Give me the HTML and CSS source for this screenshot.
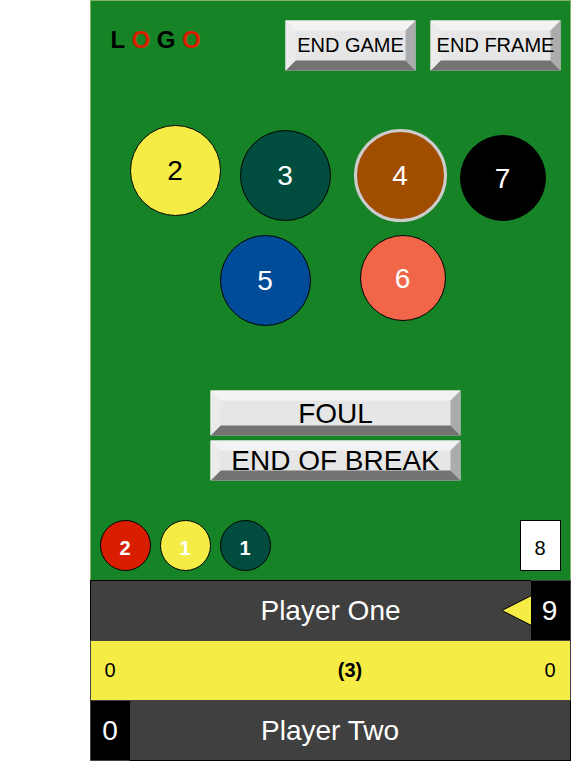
FILE: index.html
```html
<!DOCTYPE html>
<html lang="en">
<head>
<meta charset="utf-8">
<title>Snooker Scoreboard</title>
<link rel="stylesheet" href="styles.css">
</head>
<body>
<main class="app">
  <section class="table">
    <header class="topbar">
      <div class="logo">L <span>O</span> G <span>O</span></div>
      <button class="bevel bevel-small">
        <svg width="131" height="51"><path fill="#e6e6e6" d="M.5 .5h130v50H.5z"/><path fill="#f3f3f3" d="M.5 .5h130l-10 10h-110z"/><path fill="#acacac" d="M130.5 .5v50l-10-10v-30z"/><path fill="#737373" d="M.5 50.5h130l-10-10h-110z"/><path fill="#ebebeb" d="M.5 .5v50l10-10v-30z"/></svg>
        <span>END GAME</span>
      </button>
      <button class="bevel bevel-small">
        <svg width="131" height="51"><path fill="#e6e6e6" d="M.5 .5h130v50H.5z"/><path fill="#f3f3f3" d="M.5 .5h130l-10 10h-110z"/><path fill="#acacac" d="M130.5 .5v50l-10-10v-30z"/><path fill="#737373" d="M.5 50.5h130l-10-10h-110z"/><path fill="#ebebeb" d="M.5 .5v50l10-10v-30z"/></svg>
        <span>END FRAME</span>
      </button>
    </header>
    <div class="balls balls-first">
      <div class="ball yellow">2</div>
      <div class="ball green">3</div>
      <div class="ball brown">4</div>
      <div class="ball small black">7</div>
    </div>
    <div class="balls balls-second">
      <div class="ball blue">5</div>
      <div class="ball small pink">6</div>
    </div>
    <div class="actions">
      <button class="bevel">
        <svg width="251" height="46"><path fill="#e6e6e6" d="M.5 .5h250v45H.5z"/><path fill="#f3f3f3" d="M.5 .5h250l-10 10h-230z"/><path fill="#acacac" d="M250.5 .5v45l-10-10v-25z"/><path fill="#737373" d="M.5 45.5h250l-10-10h-230z"/><path fill="#ebebeb" d="M.5 .5v45l10-10v-25z"/></svg>
        <span class="foul">FOUL</span>
      </button>
      <button class="bevel">
        <svg width="251" height="41"><path fill="#e6e6e6" d="M.5 .5h250v40H.5z"/><path fill="#f3f3f3" d="M.5 .5h250l-10 10h-230z"/><path fill="#acacac" d="M250.5 .5v40l-10-10v-20z"/><path fill="#737373" d="M.5 40.5h250l-10-10h-230z"/><path fill="#ebebeb" d="M.5 .5v40l10-10v-20z"/></svg>
        <span>END OF BREAK</span>
      </button>
    </div>
    <div class="break">
      <div class="potted red">2</div>
      <div class="potted yellow-potted">1</div>
      <div class="potted green">1</div>
      <div class="break-total">8</div>
    </div>
  </section>
  <section class="player player-one">
    <div class="name">Player One</div>
    <svg class="turn" width="30" height="60"><path d="M0 0h30v1H0z"/><path d="M30.5 15.5L.9 30.5 30.5 45.5z" fill="#f5ec45" stroke="#000"/></svg>
    <div class="points">9</div>
  </section>
  <section class="frames">
    <span>0</span>
    <strong>(3)</strong>
    <span>0</span>
  </section>
  <section class="player player-two">
    <div class="points">0</div>
    <div class="name">Player Two</div>
  </section>
</main>
</body>
</html>
```
FILE: styles.css
```css
* { box-sizing: border-box; }

body {
  margin: 0;
  background: #fff;
  font-family: "Liberation Sans", Arial, sans-serif;
  color: #000;
}

.app {
  width: 481px;
  margin-left: 90px;
}

.table {
  height: 580px;
  border: 1px solid #82b366;
  border-bottom: 0;
  background: #168327;
}

.topbar {
  display: flex;
  gap: 14px;
  padding: 19px 9px 0 19.5px;
}

.logo {
  flex: 1;
  font-size: 24px;
  font-weight: bold;
  line-height: 40px;
  white-space: nowrap;
}

.logo span { color: #d91e00; }

.bevel {
  display: grid;
  place-items: center;
  padding: 0;
  border: 0;
  background: none;
  font: 28px "Liberation Sans", Arial, sans-serif;
  color: #000;
}

.bevel > * { grid-area: 1 / 1; }

.bevel svg { display: block; }

.bevel span { white-space: nowrap; }

.bevel .foul { padding-top: 2px; }

.bevel-small { font-size: 20px; }

.balls {
  display: flex;
  align-items: flex-start;
}

.balls-first {
  height: 164px;
  padding: 54px 0 0 39px;
}

.balls-second {
  height: 155px;
  padding-left: 129px;
  gap: 49px;
}

.ball {
  flex: none;
  width: 91px;
  height: 91px;
  padding-right: 1px;
  border: 1px solid #000;
  border-radius: 50%;
  color: #fff;
  font-size: 28px;
  line-height: 89px;
  text-align: center;
}

.yellow {
  background: #f5ec45;
  color: #000;
}

.balls-first .green { margin: 5px 0 0 19px; }

.green { background: #004d40; }

.brown {
  width: 93px;
  height: 93px;
  margin: 4px 0 0 23px;
  border: 3px solid #ccc;
  background: #a04d00;
  line-height: 87px;
}

.small {
  width: 86px;
  height: 86px;
  line-height: 85px;
}

.black {
  margin: 10px 0 0 13px;
  background: #000;
}

.blue { background: #004c99; }

.pink { background: #f16649; }

.actions {
  display: flex;
  flex-direction: column;
  align-items: flex-start;
  gap: 4px;
  height: 130px;
  padding-left: 119px;
}

.break {
  display: flex;
  gap: 9px;
  padding: 0 9px;
}

.potted,
.break-total {
  width: 51px;
  height: 51px;
  padding: 4px 1px 0 0;
  border: 1px solid #000;
  font-size: 20px;
  line-height: 46px;
  text-align: center;
}

.potted {
  border-radius: 50%;
  color: #fff;
  font-weight: bold;
}

.red { background: #d91e00; }

.yellow-potted { background: #f5ec45; }

.break-total {
  width: 41px;
  margin-left: auto;
  background: #fff;
}

.player {
  display: flex;
  background: #404040;
  color: #fff;
  font-size: 28px;
  line-height: 59px;
}

.name {
  flex: 1;
  text-align: center;
}

.points {
  background: #000;
  border: 1px solid #424242;
  text-align: center;
}

.player-one { height: 60px; }

.player-one .name {
  padding-left: 69px;
  border: 1px solid #000;
  border-width: 1px 0 0 1px;
}

.player-one .points {
  width: 40px;
  padding-right: 2px;
  border-width: 1px 1px 0 0;
}

.turn { display: block; }

.frames {
  display: grid;
  grid-template-columns: 38px 1fr 38px;
  height: 61px;
  border: 1px solid #424242;
  background: #f5ec45;
  font-size: 20px;
  line-height: 58px;
  text-align: center;
}

.frames strong { padding-left: 39px; }

.frames span:last-child { padding-right: 2px; }

.player-two .points {
  width: 40px;
  padding-right: 1px;
  border-width: 0 0 1px 1px;
}

.player-two .name {
  padding-right: 40px;
  border: 1px solid #000;
  border-width: 0 1px 1px 0;
}
```
